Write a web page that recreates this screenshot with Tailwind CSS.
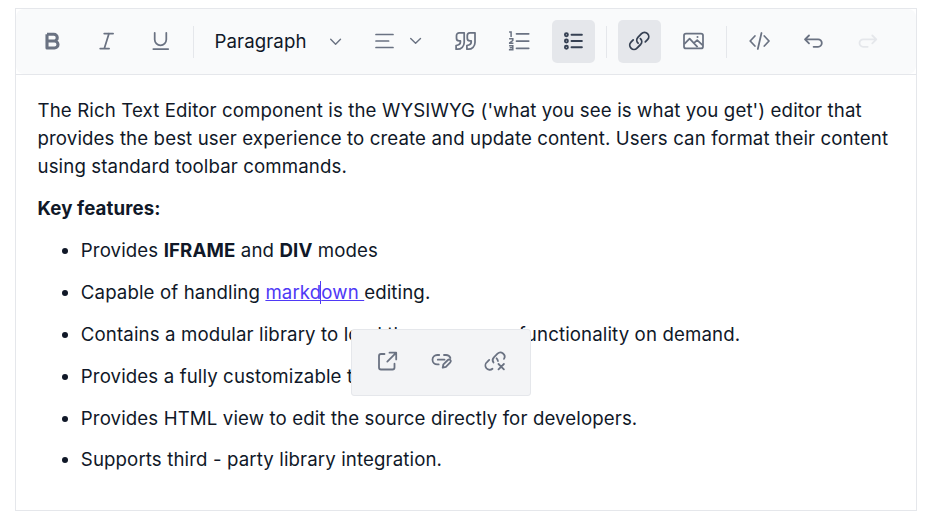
<!DOCTYPE html>
<html lang="en">
<head>
<meta charset="utf-8">
<title>Rich Text Editor</title>
<script src="https://cdn.jsdelivr.net/npm/@tailwindcss/browser@4"></script>
</head>
<body class="bg-white font-[Inter,sans-serif] text-[18.67px] leading-[28px] text-gray-900">
<main class="relative ml-[15px] mt-2 h-[503px] w-[902px] border border-gray-200 bg-white">
  <div class="h-[66px] border-b border-gray-200">
  <div class="flex h-[65px] items-center rounded-lg bg-[#f9fafb] pl-[15px] text-gray-500">
    <div class="flex gap-[11px]">
      <button class="size-[43px]" aria-label="Bold"><svg class="size-[43px]" viewBox="0 0 43 43" fill="none" stroke="currentColor" stroke-width="3.1"><path stroke-linejoin="round" d="M16 14.3h6.900a3.300 3.300 0 0 1 0 6.700H16M16 21h7.500a3.400 3.400 0 0 1 0 7H16zM16 14.300v13.700"/></svg></button>
      <button class="size-[43px]" aria-label="Italic"><svg class="size-[43px]" viewBox="0 0 43 43" fill="none" stroke="currentColor" stroke-width="1.75" stroke-linecap="round"><path d="M19.2 13.5h8.9M15.2 28.5h8.9M24 13.5l-4.700 15"/></svg></button>
      <button class="size-[43px]" aria-label="Underline"><svg class="size-[43px]" viewBox="0 0 43 43" fill="none" stroke="currentColor" stroke-width="1.75" stroke-linecap="round"><path d="M15.700 12.800v6.700a5.800 5.800 0 0 0 11.600 0v-6.700M14.300 29h14.900"/></svg></button>
    </div>
    <span class="ml-[11px] h-8 w-px bg-gray-200"></span>
    <button class="ml-[10px] flex h-[43px] w-[149px] items-center justify-between pl-[10.5px] pr-[11px]"><span class="tracking-[0.08px] text-gray-900">Paragraph</span><svg class="h-[8px] w-[13px]" viewBox="0 0 13 8" fill="none" stroke="currentColor" stroke-width="1.4" stroke-linecap="round" stroke-linejoin="round"><path d="M1.7 1.3l4.9 4.9 4.9-4.9"/></svg></button>
    <button class="ml-[11px] h-[43px] w-[70px]" aria-label="Align"><svg class="h-[43px] w-[70px]" viewBox="0 0 70 43" fill="none" stroke="currentColor" stroke-width="1.7" stroke-linecap="round" stroke-linejoin="round"><path d="M12 14.5h17M12 21h12.600M12 27.500h17"/><path stroke-width="1.4" d="M46.700 18.400l4.900 4.900 4.900-4.900"/></svg></button>
    <div class="ml-[10px] flex gap-[11px]">
      <button class="size-[43px]" aria-label="Quote"><svg class="size-[43px]" viewBox="0 0 43 43" fill="none" stroke="currentColor" stroke-width="1.75" stroke-linejoin="round"><path d="M20.200 12.800h-5a2.700 2.700 0 0 0-2.700 2.700v2.700a2.700 2.700 0 0 0 2.700 2.700h1.200v1.200a3 3 0 0 1-2.400 2.900l-1.900.5v3.700h1.500a6.600 6.600 0 0 0 6.600-6.600z"/><path d="M31 12.800h-5a2.700 2.700 0 0 0-2.700 2.700v2.700a2.700 2.700 0 0 0 2.700 2.700h1.200v1.200a3 3 0 0 1-2.400 2.900l-1.900.5v3.700h1.500a6.600 6.600 0 0 0 6.600-6.600z"/></svg></button>
      <button class="size-[43px]" aria-label="Numbered list"><svg class="size-[43px]" viewBox="0 0 43 43" fill="none" stroke="currentColor" stroke-width="1.75" stroke-linecap="round"><path d="M18.500 13.800h12.200M18.500 21h12.200M18.500 28.300h12.200"/><path stroke-width="1.5" stroke-linecap="butt" d="M11.100 11.900h2v5M11.100 18.800h3.700v1.700l-3.100 2.400v.4h3.700M11.100 25.800h3.700v4h-3.900M11.700 27.800h2.900"/></svg></button>
      <button class="size-[43px] rounded-[5px] bg-gray-200 text-gray-700" aria-label="Bulleted list"><svg class="size-[43px]" viewBox="0 0 43 43" fill="none" stroke="currentColor" stroke-width="1.9" stroke-linecap="round"><path d="M19.500 14.700h10.400M19.500 21h10.400M19.500 27.300h10.400"/><circle cx="14.4" cy="14.7" r="1.5"/><circle cx="14.4" cy="21" r="1.5"/><circle cx="14.4" cy="27.3" r="1.5"/></svg></button>
    </div>
    <span class="ml-[11px] h-8 w-px bg-gray-200"></span>
    <div class="ml-[11px] flex gap-[11px]">
      <button class="size-[43px] rounded-[5px] bg-gray-200 text-gray-700" aria-label="Link"><svg class="size-[43px]" viewBox="0 0 43 43" fill="none" stroke="currentColor" stroke-width="1.8" stroke-linecap="round" stroke-linejoin="round"><path d="M20.100 23.200a4.200 4.200 0 0 1-.2-5.900l3.600-3.600a4.200 4.200 0 0 1 6 6L27.300 21.900"/><path d="M22.400 18.600a4.200 4.200 0 0 1 .2 5.900L19 28.100a4.200 4.200 0 0 1-6-6l2.200-2.200"/></svg></button>
      <button class="size-[43px]" aria-label="Image"><svg class="size-[43px]" viewBox="0 0 43 43" fill="none" stroke="currentColor" stroke-width="1.75" stroke-linejoin="round"><rect x="12" y="13.6" width="19" height="14.8" rx="2"/><path d="M12.200 24.100l5.400-5.500 8 8.500M21.800 23.200l3.400-3.100 5.600 5.200"/><circle cx="25.500" cy="16.900" r="1" fill="currentColor" stroke="none"/></svg></button>
    </div>
    <span class="ml-[11px] h-8 w-px bg-gray-200"></span>
    <div class="ml-[11px] flex gap-[11px]">
      <button class="size-[43px]" aria-label="Code view"><svg class="size-[43px]" viewBox="0 0 43 43" fill="none" stroke="currentColor" stroke-width="1.75" stroke-linecap="round" stroke-linejoin="round"><path d="M16.900 16l-4.700 5 4.700 5M26.300 16l4.700 5-4.700 5M23.500 13l-3.700 16"/></svg></button>
      <button class="size-[43px]" aria-label="Undo"><svg class="size-[43px]" viewBox="0 0 43 43" fill="none" stroke="currentColor" stroke-width="1.8" stroke-linecap="round" stroke-linejoin="round"><path d="M17 15.500l-4 3.900 4 3.900M13.300 19.400h12.800a3.700 3.700 0 0 1 0 7.400h-4.500"/></svg></button>
      <button class="size-[43px] text-gray-200" aria-label="Redo"><svg class="size-[43px]" viewBox="0 0 43 43" fill="none" stroke="currentColor" stroke-width="1.8" stroke-linecap="round" stroke-linejoin="round"><path d="M26.300 15.500l4 3.900-4 3.900M30 19.400H17.200a3.700 3.700 0 0 0 0 7.400h4.500"/></svg></button>
    </div>
  </div>
  </div>
  <article class="pl-[21.5px] pt-[22px] tracking-[0.115px]">
    <p>The Rich Text Editor component is the WYSIWYG ('what you see is what you get') editor that<br>provides the best user experience to create and update content. Users can format their content<br>using standard toolbar commands.</p>
    <p class="mt-[14px] font-bold">Key features:</p>
    <ul class="mt-[14px] flex list-disc flex-col gap-[13.9px] pl-[43.3px]">
      <li>Provides <b>IFRAME</b> and <b>DIV</b> modes</li>
      <li>Capable of handling <a class="text-indigo-600 underline" href="#">markd<span class="relative"><i class="absolute -left-px top-0 h-[23px] w-px bg-indigo-600"></i></span>own </a>editing.</li>
      <li>Contains a modular library to load the necessary functionality on demand.</li>
      <li>Provides a fully customizable toolbar.</li>
      <li>Provides HTML view to edit the source directly for developers.</li>
      <li>Supports third - party library integration.</li>
    </ul>
  </article>
  <div class="absolute left-[335px] top-[320px] flex h-[67px] w-[180px] items-center justify-center gap-[11px] rounded-[3px] border border-gray-200 bg-gray-100 pb-[3px] text-gray-500">
    <button class="size-[43px]" aria-label="Open link"><svg class="size-[43px]" viewBox="0 0 43 43" fill="none" stroke="currentColor" stroke-width="1.8" stroke-linecap="round" stroke-linejoin="round"><path d="M18.500 14h-3.500a2 2 0 0 0-2 2v11.500a2 2 0 0 0 2 2h11.500a2 2 0 0 0 2-2v-3.800M23.500 12.700h6.700v6.700M30 12.900l-8.700 8.700"/></svg></button>
    <button class="size-[43px]" aria-label="Edit link"><svg class="size-[43px]" viewBox="0 0 43 43" fill="none" stroke="currentColor" stroke-width="1.8" stroke-linecap="round" stroke-linejoin="round"><path d="M19.200 15h-2a4.700 4.700 0 0 0 0 9.400h1.500M24 15h2a4.700 4.700 0 0 1 4.400 3M17.800 19.700h6.700M22.700 27.700l.7-3.400 4.500-4.300a1.600 1.600 0 0 1 2.400 2.400l-4.400 4.400z"/></svg></button>
    <button class="size-[43px]" aria-label="Remove link"><svg class="size-[43px]" viewBox="0 0 43 43" fill="none" stroke="currentColor" stroke-width="1.8" stroke-linecap="round" stroke-linejoin="round"><path d="M19.500 22.600a4.200 4.200 0 0 1 .4-5.300l3.600-3.600a4.200 4.200 0 0 1 6.500 5.200M22.600 18.300a4.200 4.200 0 0 1 1.300 2.700M18.500 28.800a4.200 4.200 0 0 1-5.500-6.700l2.200-2.200M24.500 24l5.400 5.400M29.900 24l-5.400 5.400"/></svg></button>
  </div>
</main>
</body>
</html>
